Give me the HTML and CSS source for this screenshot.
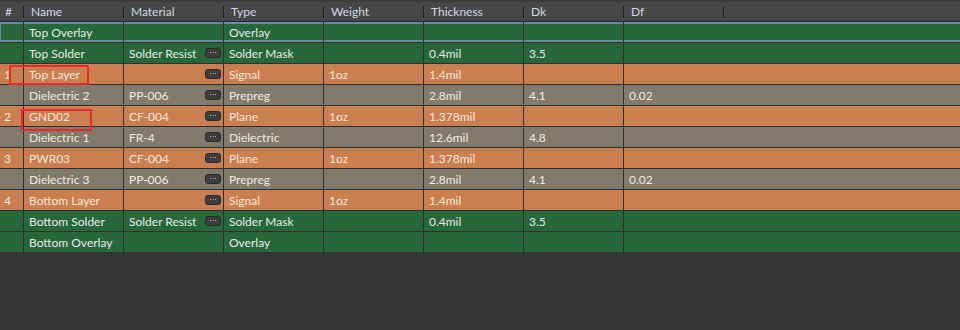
FILE: index.html
```html
<!DOCTYPE html>
<html>
<head>
<meta charset="utf-8">
<link rel="stylesheet" href="styles.css">
</head>
<body>
<div class="stack">
  <div class="head">
    <div class="hc num">#</div>
    <div class="hc">Name</div>
    <div class="hc">Material</div>
    <div class="hc">Type</div>
    <div class="hc">Weight</div>
    <div class="hc">Thickness</div>
    <div class="hc">Dk</div>
    <div class="hc">Df</div>
    <div class="hc last"></div>
  </div>

  <div class="row green sel">
    <div class="c num"></div><div class="c">Top Overlay</div><div class="c"></div><div class="c">Overlay</div><div class="c"></div><div class="c"></div><div class="c"></div><div class="c last"></div>
  </div>
  <div class="row green">
    <div class="c num"></div><div class="c">Top Solder</div><div class="c mat">Solder Resist<span class="btn"><svg width="6" height="2" viewBox="0 0 6 2"><rect x="0" y="0" width="1" height="1"/><rect x="2.5" y="0" width="1" height="1"/><rect x="5" y="0" width="1" height="1"/></svg></span></div><div class="c">Solder Mask</div><div class="c"></div><div class="c">0.4mil</div><div class="c">3.5</div><div class="c last"></div>
  </div>
  <div class="row orange">
    <div class="c num">1</div><div class="c">Top Layer</div><div class="c mat"><span class="btn"><svg width="6" height="2" viewBox="0 0 6 2"><rect x="0" y="0" width="1" height="1"/><rect x="2.5" y="0" width="1" height="1"/><rect x="5" y="0" width="1" height="1"/></svg></span></div><div class="c">Signal</div><div class="c">1oz</div><div class="c">1.4mil</div><div class="c"></div><div class="c last"></div>
  </div>
  <div class="row grey">
    <div class="c num"></div><div class="c">Dielectric 2</div><div class="c mat">PP-006<span class="btn"><svg width="6" height="2" viewBox="0 0 6 2"><rect x="0" y="0" width="1" height="1"/><rect x="2.5" y="0" width="1" height="1"/><rect x="5" y="0" width="1" height="1"/></svg></span></div><div class="c">Prepreg</div><div class="c"></div><div class="c">2.8mil</div><div class="c">4.1</div><div class="c last">0.02</div>
  </div>
  <div class="row orange">
    <div class="c num">2</div><div class="c">GND02</div><div class="c mat">CF-004<span class="btn"><svg width="6" height="2" viewBox="0 0 6 2"><rect x="0" y="0" width="1" height="1"/><rect x="2.5" y="0" width="1" height="1"/><rect x="5" y="0" width="1" height="1"/></svg></span></div><div class="c">Plane</div><div class="c">1oz</div><div class="c">1.378mil</div><div class="c"></div><div class="c last"></div>
  </div>
  <div class="row grey">
    <div class="c num"></div><div class="c">Dielectric 1</div><div class="c mat">FR-4<span class="btn"><svg width="6" height="2" viewBox="0 0 6 2"><rect x="0" y="0" width="1" height="1"/><rect x="2.5" y="0" width="1" height="1"/><rect x="5" y="0" width="1" height="1"/></svg></span></div><div class="c">Dielectric</div><div class="c"></div><div class="c">12.6mil</div><div class="c">4.8</div><div class="c last"></div>
  </div>
  <div class="row orange">
    <div class="c num">3</div><div class="c">PWR03</div><div class="c mat">CF-004<span class="btn"><svg width="6" height="2" viewBox="0 0 6 2"><rect x="0" y="0" width="1" height="1"/><rect x="2.5" y="0" width="1" height="1"/><rect x="5" y="0" width="1" height="1"/></svg></span></div><div class="c">Plane</div><div class="c">1oz</div><div class="c">1.378mil</div><div class="c"></div><div class="c last"></div>
  </div>
  <div class="row grey">
    <div class="c num"></div><div class="c">Dielectric 3</div><div class="c mat">PP-006<span class="btn"><svg width="6" height="2" viewBox="0 0 6 2"><rect x="0" y="0" width="1" height="1"/><rect x="2.5" y="0" width="1" height="1"/><rect x="5" y="0" width="1" height="1"/></svg></span></div><div class="c">Prepreg</div><div class="c"></div><div class="c">2.8mil</div><div class="c">4.1</div><div class="c last">0.02</div>
  </div>
  <div class="row orange">
    <div class="c num">4</div><div class="c">Bottom Layer</div><div class="c mat"><span class="btn"><svg width="6" height="2" viewBox="0 0 6 2"><rect x="0" y="0" width="1" height="1"/><rect x="2.5" y="0" width="1" height="1"/><rect x="5" y="0" width="1" height="1"/></svg></span></div><div class="c">Signal</div><div class="c">1oz</div><div class="c">1.4mil</div><div class="c"></div><div class="c last"></div>
  </div>
  <div class="row green">
    <div class="c num"></div><div class="c">Bottom Solder</div><div class="c mat">Solder Resist<span class="btn"><svg width="6" height="2" viewBox="0 0 6 2"><rect x="0" y="0" width="1" height="1"/><rect x="2.5" y="0" width="1" height="1"/><rect x="5" y="0" width="1" height="1"/></svg></span></div><div class="c">Solder Mask</div><div class="c"></div><div class="c">0.4mil</div><div class="c">3.5</div><div class="c last"></div>
  </div>
  <div class="row green">
    <div class="c num"></div><div class="c">Bottom Overlay</div><div class="c"></div><div class="c">Overlay</div><div class="c"></div><div class="c"></div><div class="c"></div><div class="c last"></div>
  </div>

  <div class="mark mark-1"></div>
  <div class="mark mark-2"></div>
</div>
</body>
</html>
```

FILE: styles.css
```css
html, body {
  margin: 0;
  padding: 0;
  background: #353535;
}
body {
  font-family: Lato, "Noto Sans", sans-serif;
  font-size: 12px;
  width: 960px;
  height: 330px;
  overflow: hidden;
}
.stack {
  position: relative;
}
.head {
  display: grid;
  grid-template-columns: 24px repeat(7, 100px) 1fr;
  height: 22px;
  box-sizing: border-box;
  background: #474747;
  border-top: 2px solid #3c3c3c;
  border-bottom: 1px solid #2b2b2b;
}
.hc {
  position: relative;
  color: #d2d8e0;
  padding-left: 7px;
  line-height: 19px;
  white-space: nowrap;
}
.hc.num {
  padding-left: 5px;
}
.hc::after {
  content: "";
  position: absolute;
  right: 0;
  top: 4px;
  width: 1px;
  height: 12px;
  background: #1f1f1f;
}
.hc.last::after {
  display: none;
}
.row {
  display: grid;
  grid-template-columns: 24px repeat(6, 100px) 1fr;
  height: 21px;
  box-sizing: border-box;
  border-bottom: 1px solid #303030;
}
.c {
  position: relative;
  box-sizing: border-box;
  border-right: 1px solid #303030;
  padding-left: 5px;
  line-height: 22px;
  white-space: nowrap;
  overflow: hidden;
}
.c.num {
  padding-left: 4px;
}
.c.last {
  border-right: none;
}
.green {
  background: #28673a;
  color: #e6ece8;
}
.orange {
  background: #c97f50;
  color: #f4e6da;
}
.grey {
  background: #817b6b;
  color: #eeebe4;
}
.sel {
  box-shadow: inset 0 2px 0 #6e8ba6, inset 0 -2px 0 #6e8ba6, inset 1px 0 0 #6e8ba6;
}
.btn {
  position: absolute;
  right: 2px;
  top: 5px;
  width: 16px;
  height: 10px;
  box-sizing: border-box;
  border-radius: 3px;
  background: #3d3d3d;
  border: 1px solid #2a2a2a;
  display: flex;
  align-items: center;
  justify-content: center;
}
.btn svg {
  display: block;
  fill: #b8b8b8;
}
.mark {
  position: absolute;
  border: 2px solid #f0262a;
  box-sizing: border-box;
}
.mark-1 {
  left: 9px;
  top: 65px;
  width: 80px;
  height: 20px;
}
.mark-2 {
  left: 21px;
  top: 109px;
  width: 71px;
  height: 22px;
}
```
